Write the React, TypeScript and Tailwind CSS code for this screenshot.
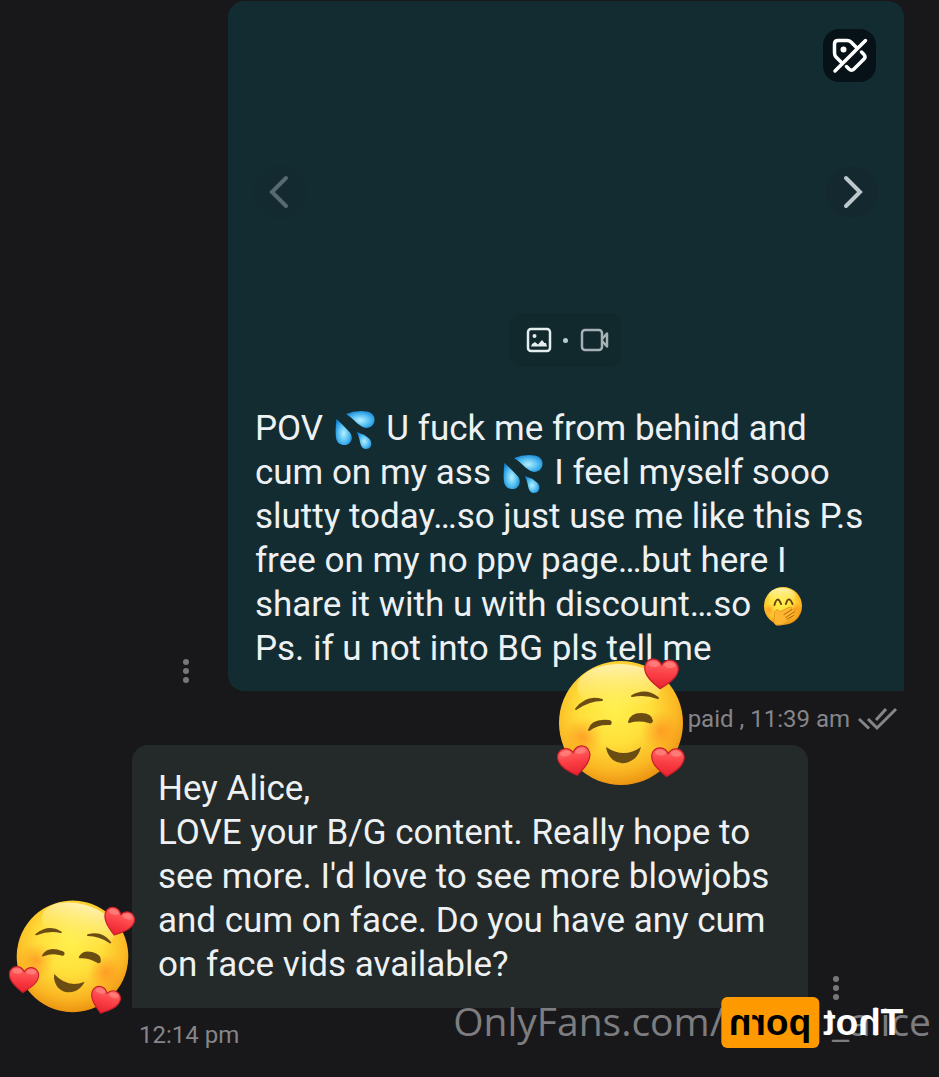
import type { ReactNode } from "react";

const HEART =
  "M12 21C7 17.500 1.500 13.500 1.500 8.300 1.500 5 4 2.800 6.800 2.800c2.200 0 4 1.200 5.200 3.400 1.200-2.200 3-3.400 5.200-3.400 2.800 0 5.300 2.200 5.300 5.500C22.500 13.500 17 17.500 12 21z";

function Heart({ transform }: { transform: string }) {
  return (
    <g transform={transform}>
      <path d={HEART} fill="url(#heart)" stroke="#c81e2c" strokeWidth="0.8" />
      <ellipse cx="7" cy="6" rx="3.500" ry="1.800" fill="#ff9a94" opacity="0.5" />
      <ellipse cx="17" cy="6" rx="3.500" ry="1.800" fill="#ff9a94" opacity="0.5" />
    </g>
  );
}

function LovedFace({ className, tilt }: { className: string; tilt: number }) {
  return (
    <svg
      viewBox="0 0 130 130"
      className={`overflow-visible ${className}`}
      role="img"
      aria-label="Smiling face with hearts"
    >
      <defs>
        <radialGradient id="face" cx="0.45" cy="0.38" r="0.64">
          <stop offset="0" stopColor="#fff04e" />
          <stop offset="0.45" stopColor="#ffdf3a" />
          <stop offset="0.78" stopColor="#fbb824" />
          <stop offset="1" stopColor="#ea9010" />
        </radialGradient>
        <linearGradient id="shine" x1="0" y1="0" x2="0" y2="1">
          <stop offset="0" stopColor="#fff4bd" stopOpacity="0.9" />
          <stop offset="1" stopColor="#fff27a" stopOpacity="0" />
        </linearGradient>
        <radialGradient id="blush">
          <stop offset="0" stopColor="#ff7a1c" stopOpacity="0.55" />
          <stop offset="1" stopColor="#ff8a1c" stopOpacity="0" />
        </radialGradient>
        <linearGradient id="heart" x1="0" y1="0" x2="0" y2="1">
          <stop offset="0" stopColor="#ff6a66" />
          <stop offset="0.5" stopColor="#fb3f45" />
          <stop offset="1" stopColor="#e8222f" />
        </linearGradient>
      </defs>
      <g transform={`rotate(${tilt} 65 66)`}>
        <circle cx="65" cy="66" r="62" fill="url(#face)" />
        <ellipse cx="63" cy="30" rx="42" ry="23" fill="url(#shine)" />
        <circle cx="27" cy="80" r="20" fill="url(#blush)" />
        <circle cx="105" cy="74" r="20" fill="url(#blush)" />
        <g fill="#6b4d14" stroke="#6b4d14" strokeLinecap="round" strokeLinejoin="round">
          <path d="M20 52Q31 38 46 43Q33 43 20 52z" strokeWidth="2" />
          <path d="M76 39Q90 31 102 41Q89 36 76 39z" strokeWidth="2" />
          <path d="M33 73Q36 62 53 64Q56 65 54 67Q42 66 33 73z" strokeWidth="2" />
          <path d="M73 65Q75 57 85 57Q95 57 96 64Q95 66 93 65Q83 62 73 65z" strokeWidth="2" />
        </g>
        <path d="M50 90Q68 102 85 90Q83 98 78 102Q67 110 57 103Q51 98 50 90z" fill="#6b4d14" />
        <Heart transform="translate(86 -2) rotate(4 18 18) scale(1.600)" />
        <Heart transform="translate(0 86) rotate(-10 18 18) scale(1.550)" />
        <Heart transform="translate(93 87) rotate(4 18 18) scale(1.550)" />
      </g>
    </svg>
  );
}

function Drops() {
  return (
    <svg viewBox="0 0 40 40" className="mx-[3px] inline-block size-10 align-[-10px]" role="img" aria-label="Sweat droplets">
      <defs>
        <radialGradient id="drop" cx="0.5" cy="0.55" r="0.6">
          <stop offset="0" stopColor="#b5f0ff" />
          <stop offset="0.55" stopColor="#54bff2" />
          <stop offset="1" stopColor="#1685d4" />
        </radialGradient>
      </defs>
      <g fill="url(#drop)">
        <path d="M11 4Q21 0 32 1.500C37 2.500 40 6 39.500 10.500C39 16 34 19 29 17.500C23 15.500 18 8 11 4z" />
        <path d="M1.500 9Q8 15 14.500 22C18 26 17.500 32 12.500 34.500C7 36.500 2 33.500 1 28Q0 20 1.500 9z" />
        <path d="M22 22Q29 24 34 28.500C37.500 32 37 37 33.500 38.500C29.500 40 26.500 38 25.500 34Q24.500 28 22 22z" />
      </g>
    </svg>
  );
}

function Giggle() {
  return (
    <svg viewBox="0 0 42 42" className="mx-[3px] inline-block size-10 align-[-10px]" role="img" aria-label="Face with hand over mouth">
      <circle cx="21" cy="21" r="20" fill="url(#face)" />
      <ellipse cx="20" cy="10" rx="14" ry="8" fill="url(#shine)" />
      <circle cx="7" cy="25" r="6" fill="url(#blush)" />
      <circle cx="35" cy="24" r="6" fill="url(#blush)" />
      <g fill="none" stroke="#6b4311" strokeWidth="2" strokeLinecap="round">
        <path d="M12 20Q15 9 19 19" />
        <path d="M24 19Q27 9 31 19" />
      </g>
      <path
        d="M12 27Q15 23 18 27L28 22Q31 22 30 25L33 24Q35 25 33 27L34 28Q34 31 31 32L25 38Q20 42 14 41Q10 39 12 33z"
        fill="#ffb52e"
        stroke="#e09a22"
      />
      <path d="M30 25L22 30M33 27L24 33M32 31L25 35" fill="none" stroke="#a8620f" strokeLinecap="round" />
    </svg>
  );
}

function MoreButton() {
  return (
    <button type="button" aria-label="More options" className="mb-2 flex flex-col items-center gap-[3px]">
      <span className="size-1.5 rounded-full bg-[#77777a]" />
      <span className="size-1.5 rounded-full bg-[#77777a]" />
      <span className="size-1.5 rounded-full bg-[#77777a]" />
    </button>
  );
}

function Arrow({ label, className, children }: { label: string; className: string; children: ReactNode }) {
  return (
    <button
      type="button"
      aria-label={label}
      className={`flex size-[52px] items-center justify-center rounded-full ${className}`}
    >
      <svg viewBox="0 0 24 36" className="h-9 w-6" fill="none" stroke="currentColor" strokeWidth="4" strokeLinecap="round">
        {children}
      </svg>
    </button>
  );
}

export default function App() {
  return (
    <main className="relative min-h-screen overflow-hidden bg-[#18181a] pt-px font-['Roboto',sans-serif] text-[35px] leading-[44px] text-[#eef1f3]">
      <div className="flex items-end justify-end">
        <MoreButton />
        <article className="mr-[35px] ml-[39px] w-[72%] shrink-0 rounded-t-2xl rounded-bl-2xl bg-[#132c32] pb-5">
          <div className="flex h-[406px] flex-col px-[26px] pt-7">
            <button
              type="button"
              aria-label="Untag"
              className="mr-0.5 flex size-[53px] items-center justify-center self-end rounded-2xl bg-[#061217] text-white"
            >
              <svg
                viewBox="0 0 36 36"
                className="size-9"
                fill="none"
                stroke="currentColor"
                strokeWidth="3.500"
                strokeLinecap="round"
                strokeLinejoin="round"
              >
                <path d="M33.500 2.500L3 33" />
                <path d="M10 25L4 19Q2.500 17.500 2.500 15V6Q2.500 2.500 6 2.500H15Q17.500 2.500 19 4L24.500 9.500" />
                <path d="M29.500 14L32 16.500Q34 19 32 21L22 31Q19.500 33.500 17 31L14.500 28.500" />
                <circle cx="11.500" cy="11.500" r="3" fill="currentColor" stroke="none" />
              </svg>
            </button>
            <div className="mt-[84px] flex items-center justify-between">
              <Arrow label="Previous" className="bg-[#122a30] text-[#566a70]">
                <path d="M18 4L4 18L18 32" />
              </Arrow>
              <Arrow label="Next" className="bg-[#14292f] text-[#bcc8cc]">
                <path d="M6 4L20 18L6 32" />
              </Arrow>
            </div>
            <div className="mt-[95px] flex h-[54px] w-28 items-center justify-between self-center rounded-xl bg-[#11282d] pr-3 pl-4">
              <svg viewBox="0 0 26 26" className="size-[26px]" fill="none" stroke="#e5eeee" strokeWidth="2.500">
                <rect x="2" y="2" width="22" height="22" rx="3" />
                <circle cx="8.500" cy="9" r="2" fill="#e5eeee" stroke="none" />
                <path d="M5 19.500L6 17L9 15L12 17.500L16 13L18.500 16L20 16L21 19.500z" fill="#e5eeee" stroke="none" />
              </svg>
              <span className="size-[5px] rounded-full bg-[#b9cccd]" />
              <svg
                viewBox="0 0 30 24"
                className="h-6 w-[30px]"
                fill="none"
                stroke="#a5b1b4"
                strokeWidth="2.500"
                strokeLinejoin="round"
              >
                <rect x="2" y="2" width="20" height="20" rx="3" />
                <path d="M22 11L27 5.500V18.500L22 13" />
              </svg>
            </div>
          </div>
          <p className="pr-[34px] pl-[27px]">
            POV <Drops /> U fuck me from behind and cum on my ass <Drops /> I feel myself sooo slutty today…so just use
            me like this P.s free on my no ppv page…but here I share it with u with discount…so <Giggle />
            <br />
            Ps. if u not into BG pls tell me
          </p>
        </article>
      </div>

      <div className="relative flex h-14 items-center justify-end gap-2 pr-[41px] text-2xl text-[#85858a]">
        <LovedFace className="absolute -top-[34px] right-[253px] size-[130px]" tilt={0} />
        <span>paid , 11:39 am</span>
        <svg viewBox="0 0 40 24" className="h-6 w-10" fill="none" stroke="currentColor" strokeWidth="3">
          <path d="M1 12L11 21.500" />
          <path d="M10 12L19 21L38 2" />
          <path d="M18 13L28 2" />
        </svg>
      </div>

      <div className="-mt-0.5 flex items-end gap-[25px]">
        <article className="ml-[132px] w-[72%] rounded-t-2xl bg-[#242929] pt-[22px] pr-[34px] pb-[21px] pl-[26px]">
          <p>
            Hey Alice,
            <br />
            LOVE your B/G content. Really hope to see more. I'd love to see more blowjobs and cum on face. Do you have
            any cum on face vids available?
          </p>
        </article>
        <MoreButton />
      </div>
      <div className="relative flex h-[54px] items-center pl-[139px] text-2xl text-[#85858a]">
        <LovedFace className="absolute bottom-12 left-3.5 size-[117px]" tilt={14} />
        <span>12:14 pm</span>
      </div>

      <div className="absolute top-[996px] right-2 flex h-[50px] items-center font-['Open_Sans',sans-serif] text-[39px] text-[#7d7d80]">
        <span className="mr-[108px]">OnlyFans.com/</span>
        <span>_alice</span>
      </div>
      <div className="absolute top-[997px] right-9 flex h-[51px] -scale-x-100 items-center font-['Liberation_Sans',sans-serif] text-[37px] font-bold">
        <span className="text-white">Thot</span>
        <span className="ml-1 flex h-full items-center rounded-md bg-[#ff9900] px-2 text-black">porn</span>
      </div>
    </main>
  );
}
